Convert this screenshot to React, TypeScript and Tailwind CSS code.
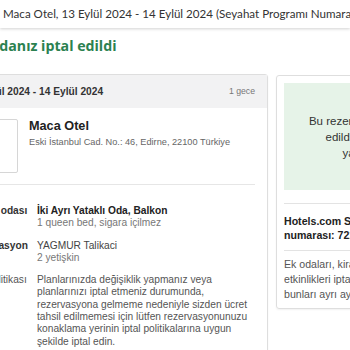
export default function App() {
  return (
    <div className="w-[350px] h-[350px] overflow-hidden bg-white relative font-['Liberation_Sans',Arial,sans-serif] text-[#333]">
      {/* top bar */}
      <div className="h-[28px] bg-white shadow-[0_1px_3px_rgba(0,0,0,0.18)] flex items-center pl-[3px] whitespace-nowrap text-[11.6px] font-['Lato',sans-serif] text-[#333] relative z-10">
        Maca Otel, 13 Eylül 2024 - 14 Eylül 2024 (Seyahat Programı Numarası: 72104758331902)
      </div>

      <h1 className="mt-[8px] ml-[-12px] text-[14.2px] leading-[19px] font-bold text-[#2b8150] font-['Open_Sans',sans-serif] whitespace-nowrap">
        Odanız iptal edildi
      </h1>

      <div className="mt-[19px] ml-[-110px] flex gap-[8px] items-start">
        {/* left card */}
        <div className="w-[378px] shrink-0 border border-[#dedede] rounded-[3px] shadow-[0_1px_2px_rgba(0,0,0,0.06)]">
          <div className="h-[33px] bg-[#f2f2f3] flex items-center justify-between pl-[75px] pr-[12px]">
            <span className="text-[10.2px] font-bold text-[#333] whitespace-nowrap">13 Eylül 2024 - 14 Eylül 2024</span>
            <span className="text-[8.7px] text-[#777]">1 gece</span>
          </div>
          <div className="pl-[67px] pr-[12px] pt-[11px]">
            <div className="flex gap-[11px]">
              <div className="w-[60px] h-[54px] border border-[#d6d6d6] rounded-[2px] bg-white shrink-0" />
              <div>
                <div className="text-[12.7px] leading-[15px] font-bold text-[#222]">Maca Otel</div>
                <div className="mt-[2px] text-[9.2px] leading-[12px] text-[#666] whitespace-nowrap">Eski İstanbul Cad. No.: 46, Edirne, 22100 Türkiye</div>
              </div>
            </div>
            <div className="mt-[11px] border-t border-[#e6e6e6]" />
            <div className="pt-[20px] flex flex-col gap-[10px] text-[10.2px] leading-[12.3px] pb-[16px]">
              <div className="flex">
                <div className="w-[79px] shrink-0 pl-[7px] font-bold text-[#333] whitespace-nowrap">Misafir odası</div>
                <div>
                  <div className="font-bold text-[#222]">İki Ayrı Yataklı Oda, Balkon</div>
                  <div className="text-[#777]">1 queen bed, sigara içilmez</div>
                </div>
              </div>
              <div className="flex">
                <div className="w-[79px] shrink-0 pl-[7px] font-bold text-[#333] whitespace-nowrap">Rezervasyon</div>
                <div>
                  <div className="text-[#444]">YAGMUR Talikaci</div>
                  <div className="text-[#777]">2 yetişkin</div>
                </div>
              </div>
              <div className="flex">
                <div className="w-[79px] shrink-0 pl-[7px] text-[#555] whitespace-nowrap">İptal politikası</div>
                <div className="w-[219px] text-[#555]">
                  Planlarınızda değişiklik yapmanız veya planlarınızı iptal etmeniz durumunda, rezervasyona gelmeme nedeniyle sizden ücret tahsil edilmemesi için lütfen rezervasyonunuzu konaklama yerinin iptal politikalarına uygun şekilde iptal edin.
                </div>
              </div>
            </div>
          </div>
        </div>

        {/* right card */}
        <div className="w-[170px] shrink-0 mt-[1px] border border-[#dedede] rounded-[3px] px-[7px] pt-[7px] pb-[6px] shadow-[0_1px_2px_rgba(0,0,0,0.06)]">
          <div className="h-[107px] bg-[#e6f3e8] flex items-center justify-center text-center text-[11.5px] leading-[16px] text-[#333]">
            <p>
              Bu rezervasyon iptal
              <br />
              edildi ve ücret
              <br />
              yapıldı.
            </p>
          </div>
          <div className="mt-[13px] border-t border-[#e3e3e3] pt-[10px] pb-[8px] text-[10.6px] leading-[14px] font-bold text-[#222]">
            Hotels.com Seyahat Programı numarası: 72104758331902
          </div>
          <div className="border-t border-[#e3e3e3] pt-[6px] text-[10.6px] leading-[15px] text-[#555] whitespace-nowrap">
            Ek odaları, kiralık araçları veya
            <br />
            etkinlikleri iptal etmek için
            <br />
            bunları ayrı ayrı iptal edin.
          </div>
        </div>
      </div>
    </div>
  )
}
